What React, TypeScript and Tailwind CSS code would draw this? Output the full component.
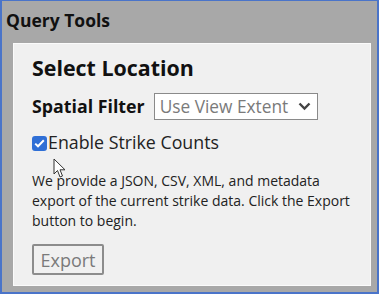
import React from 'react';

const Cursor: React.FC = () => (
  <svg className="absolute left-[51px] top-[157px]" width="14" height="21" viewBox="0 0 14 21">
    <path d="M1 1 L1 16 L4.5 12.5 L7 19 L9.5 18 L7 11.8 L12 11.8 Z" fill="#fff" stroke="#333" strokeWidth="1" strokeLinejoin="round" />
  </svg>
);

const App: React.FC = () => {
  return (
    <div className="relative w-[379px] h-[294px] bg-[#a8a8a8] border-[#4a74c9] border-t border-l-2 border-r-2 border-b-2 font-['Open_Sans',sans-serif] overflow-hidden">
      <h1 className="pl-[4px] pt-[7px] h-[42px] text-[17.5px] font-bold text-[#111] leading-[24px]">Query Tools</h1>
      <div className="mx-[11px] w-[358px] h-[243px] bg-[#f0f0f0] border border-[#fbfbfb] px-[18px] pt-[9px]">
        <h2 className="text-[21.4px] font-bold text-[#111] leading-[30px]">Select Location</h2>
        <div className="flex items-center gap-[9px] mt-[10px]">
          <span className="text-[17.8px] font-bold text-[#111] leading-[27px]">Spatial Filter</span>
          <div className="flex items-center justify-between w-[164px] h-[27px] bg-white border border-[#8a8a8a] pl-[5px] pr-[6px]">
            <span className="text-[17.3px] text-[#7a7a7a] leading-none">Use View Extent</span>
            <svg width="13" height="9" viewBox="0 0 13 9">
              <path d="M1.5 1.5 L6.5 6.5 L11.5 1.5" fill="none" stroke="#444" strokeWidth="2.4" />
            </svg>
          </div>
        </div>
        <label className="flex items-center mt-[13px] h-[20px]">
          <span className="w-[15px] h-[15px] rounded-[3px] bg-[#2f6fd6] flex items-center justify-center">
            <svg width="11" height="9" viewBox="0 0 11 9">
              <path d="M1.2 4.6 L4 7.3 L9.8 1.3" fill="none" stroke="#fff" strokeWidth="2" />
            </svg>
          </span>
          <span className="text-[17.8px] text-[#222] leading-none ml-[1px]">Enable Strike Counts</span>
        </label>
        <p className="mt-[18px] text-[14px] text-[#222] leading-[20px] w-[324px]">
          We provide a JSON, CSV, XML, and metadata export of the current strike data. Click the Export button to begin.
        </p>
        <button className="mt-[13px] w-[72px] h-[31px] border-2 border-[#8c8c8c] rounded-[2px] text-[18px] text-[#7a7a7a] leading-none bg-[#f0f0f0]">
          Export
        </button>
      </div>
      <Cursor />
    </div>
  );
};

export default App;
